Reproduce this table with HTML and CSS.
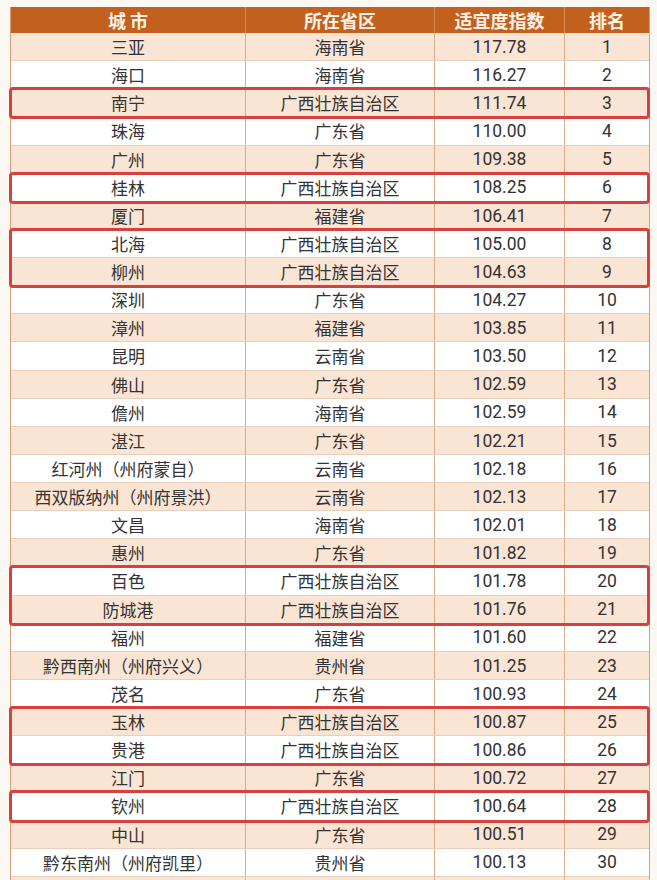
FILE: index.html
```html
<!DOCTYPE html>
<html lang="zh-CN">
<head>
<meta charset="utf-8">
<title>适宜度指数排名</title>
<link rel="stylesheet" href="styles.css">
</head>
<body>
<div class="table">
  <div class="row head"><div>城 市</div><div>所在省区</div><div>适宜度指数</div><div>排名</div></div>
  <div class="row alt"><div>三亚</div><div>海南省</div><div>117.78</div><div>1</div></div>
  <div class="row"><div>海口</div><div>海南省</div><div>116.27</div><div>2</div></div>
  <div class="hl">
    <div class="row alt"><div>南宁</div><div>广西壮族自治区</div><div>111.74</div><div>3</div></div>
  </div>
  <div class="row"><div>珠海</div><div>广东省</div><div>110.00</div><div>4</div></div>
  <div class="row alt"><div>广州</div><div>广东省</div><div>109.38</div><div>5</div></div>
  <div class="hl">
    <div class="row"><div>桂林</div><div>广西壮族自治区</div><div>108.25</div><div>6</div></div>
  </div>
  <div class="row alt"><div>厦门</div><div>福建省</div><div>106.41</div><div>7</div></div>
  <div class="hl">
    <div class="row"><div>北海</div><div>广西壮族自治区</div><div>105.00</div><div>8</div></div>
    <div class="row alt"><div>柳州</div><div>广西壮族自治区</div><div>104.63</div><div>9</div></div>
  </div>
  <div class="row"><div>深圳</div><div>广东省</div><div>104.27</div><div>10</div></div>
  <div class="row alt"><div>漳州</div><div>福建省</div><div>103.85</div><div>11</div></div>
  <div class="row"><div>昆明</div><div>云南省</div><div>103.50</div><div>12</div></div>
  <div class="row alt"><div>佛山</div><div>广东省</div><div>102.59</div><div>13</div></div>
  <div class="row"><div>儋州</div><div>海南省</div><div>102.59</div><div>14</div></div>
  <div class="row alt"><div>湛江</div><div>广东省</div><div>102.21</div><div>15</div></div>
  <div class="row"><div>红河州（州府蒙自）</div><div>云南省</div><div>102.18</div><div>16</div></div>
  <div class="row alt"><div>西双版纳州（州府景洪）</div><div>云南省</div><div>102.13</div><div>17</div></div>
  <div class="row"><div>文昌</div><div>海南省</div><div>102.01</div><div>18</div></div>
  <div class="row alt"><div>惠州</div><div>广东省</div><div>101.82</div><div>19</div></div>
  <div class="hl">
    <div class="row"><div>百色</div><div>广西壮族自治区</div><div>101.78</div><div>20</div></div>
    <div class="row alt"><div>防城港</div><div>广西壮族自治区</div><div>101.76</div><div>21</div></div>
  </div>
  <div class="row"><div>福州</div><div>福建省</div><div>101.60</div><div>22</div></div>
  <div class="row alt"><div>黔西南州（州府兴义）</div><div>贵州省</div><div>101.25</div><div>23</div></div>
  <div class="row"><div>茂名</div><div>广东省</div><div>100.93</div><div>24</div></div>
  <div class="hl">
    <div class="row alt"><div>玉林</div><div>广西壮族自治区</div><div>100.87</div><div>25</div></div>
    <div class="row"><div>贵港</div><div>广西壮族自治区</div><div>100.86</div><div>26</div></div>
  </div>
  <div class="row alt"><div>江门</div><div>广东省</div><div>100.72</div><div>27</div></div>
  <div class="hl">
    <div class="row"><div>钦州</div><div>广西壮族自治区</div><div>100.64</div><div>28</div></div>
  </div>
  <div class="row alt"><div>中山</div><div>广东省</div><div>100.51</div><div>29</div></div>
  <div class="row"><div>黔东南州（州府凯里）</div><div>贵州省</div><div>100.13</div><div>30</div></div>
  <div class="row alt"><div></div><div></div><div></div><div></div></div>
</div>
</body>
</html>
```
FILE: styles.css
```css
html, body {
  margin: 0;
  padding: 0;
  background: #fbf7f2;
}
body {
  font-family: "Noto Sans CJK SC", "Noto Sans", sans-serif;
  color: #333;
  padding: 7px 0 0 10px;
  overflow: hidden;
  height: 880px;
  box-sizing: border-box;
}
.table {
  width: 640px;
  border-left: 1px solid #d2a07c;
  border-right: 1px solid #d2a07c;
  box-sizing: border-box;
}
.row {
  display: grid;
  grid-template-columns: 234px 189px 130px 85px;
  height: 28.13px;
  box-sizing: border-box;
  border-bottom: 1px solid #ead0bc;
  background: #ffffff;
}
.row.alt {
  background: #fae4d4;
}
.row > div {
  display: flex;
  align-items: center;
  justify-content: center;
  font-size: 17px;
  line-height: 1;
  white-space: nowrap;
}
.row > div:nth-child(3),
.row > div:nth-child(4) {
  font-family: Roboto, "Noto Sans", sans-serif;
  font-size: 17.5px;
  padding-top: 2px;
}
.row > div + div {
  border-left: 1px solid #d8ad8c;
}
.head {
  height: 26px;
  background: #c3601d;
  border-bottom: none;
}
.head > div,
.head > div:nth-child(3),
.head > div:nth-child(4) {
  font-family: "Noto Sans CJK SC", sans-serif;
  color: #fdf0e4;
  font-weight: bold;
  font-size: 18px;
  padding-top: 0;
}
.head > div + div {
  border-left: 1px solid #d68a55;
}
.hl {
  position: relative;
}
.hl::after {
  content: "";
  position: absolute;
  top: -2px;
  bottom: -2px;
  left: -2px;
  right: -1px;
  border: 3.5px solid #d8403f;
  border-radius: 4px;
  pointer-events: none;
}
```
